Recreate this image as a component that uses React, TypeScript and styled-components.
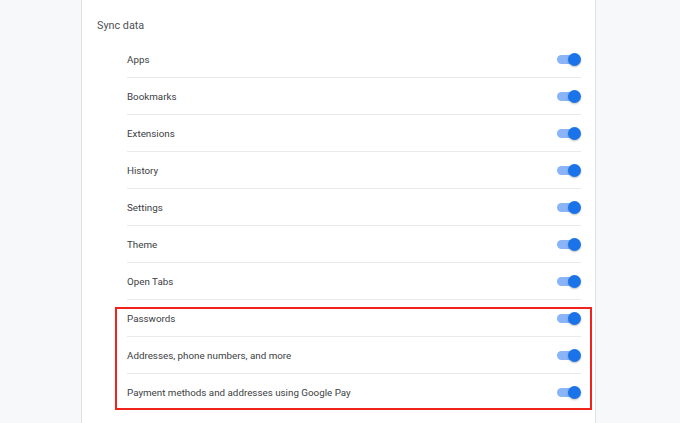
import React from "react";
import styled, { createGlobalStyle } from "styled-components";

const Global = createGlobalStyle`
  html, body { margin: 0; padding: 0; }
  body {
    background: #f7f8fa;
    font-family: Roboto, "Liberation Sans", Arial, sans-serif;
    width: 680px;
    height: 423px;
    overflow: hidden;
  }
`;

const Page = styled.div`
  display: flex;
  padding-left: 81px;
  height: 423px;
  overflow: hidden;
`;

const Card = styled.section`
  width: 515px;
  background: #ffffff;
  border-left: 1px solid #dfe1e5;
  border-right: 1px solid #dfe1e5;
  min-height: 423px;
  box-sizing: border-box;
`;

const Header = styled.h2`
  margin: 0;
  padding: 18px 0 7px 15px;
  font-size: 10.8px;
  line-height: 16px;
  font-weight: 400;
  color: #4d5156;
`;

const List = styled.div`
  display: flex;
  flex-direction: column;
  padding: 0 14px 0 45px;
`;

const Row = styled.div`
  display: flex;
  align-items: center;
  justify-content: space-between;
  height: 36px;
  & + & {
    border-top: 1px solid #e8eaed;
  }
`;

const Group = styled.div`
  position: relative;
  border-top: 1px solid #e8eaed;
  & > ${Row}:first-child { border-top: none; }
  &::after {
    content: "";
    position: absolute;
    left: -12px;
    right: -11px;
    top: 7px;
    bottom: 0px;
    border: 2px solid #f2221d;
    pointer-events: none;
  }
`;

const Label = styled.span`
  font-size: 9.8px;
  color: #3c4043;
`;

const Toggle = styled.span`
  position: relative;
  display: inline-block;
  width: 24px;
  height: 13px;
`;

const Track = styled.span`
  position: absolute;
  left: 0;
  top: 2px;
  width: 20px;
  height: 9px;
  border-radius: 5px;
  background: #8ab4f8;
`;

const Knob = styled.span`
  position: absolute;
  right: 0;
  top: 0;
  width: 13px;
  height: 13px;
  border-radius: 50%;
  background: #1a73e8;
  box-shadow: 0 1px 2px rgba(0, 0, 0, 0.25);
`;

const Switch = () => (
  <Toggle>
    <Track />
    <Knob />
  </Toggle>
);

const top = ["Apps", "Bookmarks", "Extensions", "History", "Settings", "Theme", "Open Tabs"];
const highlighted = [
  "Passwords",
  "Addresses, phone numbers, and more",
  "Payment methods and addresses using Google Pay",
];

export default function App() {
  return (
    <>
      <Global />
      <Page>
        <Card>
          <Header>Sync data</Header>
          <List>
            {top.map((t) => (
              <Row key={t}>
                <Label>{t}</Label>
                <Switch />
              </Row>
            ))}
            <Group>
              {highlighted.map((t) => (
                <Row key={t}>
                  <Label>{t}</Label>
                  <Switch />
                </Row>
              ))}
            </Group>
          </List>
        </Card>
      </Page>
    </>
  );
}
